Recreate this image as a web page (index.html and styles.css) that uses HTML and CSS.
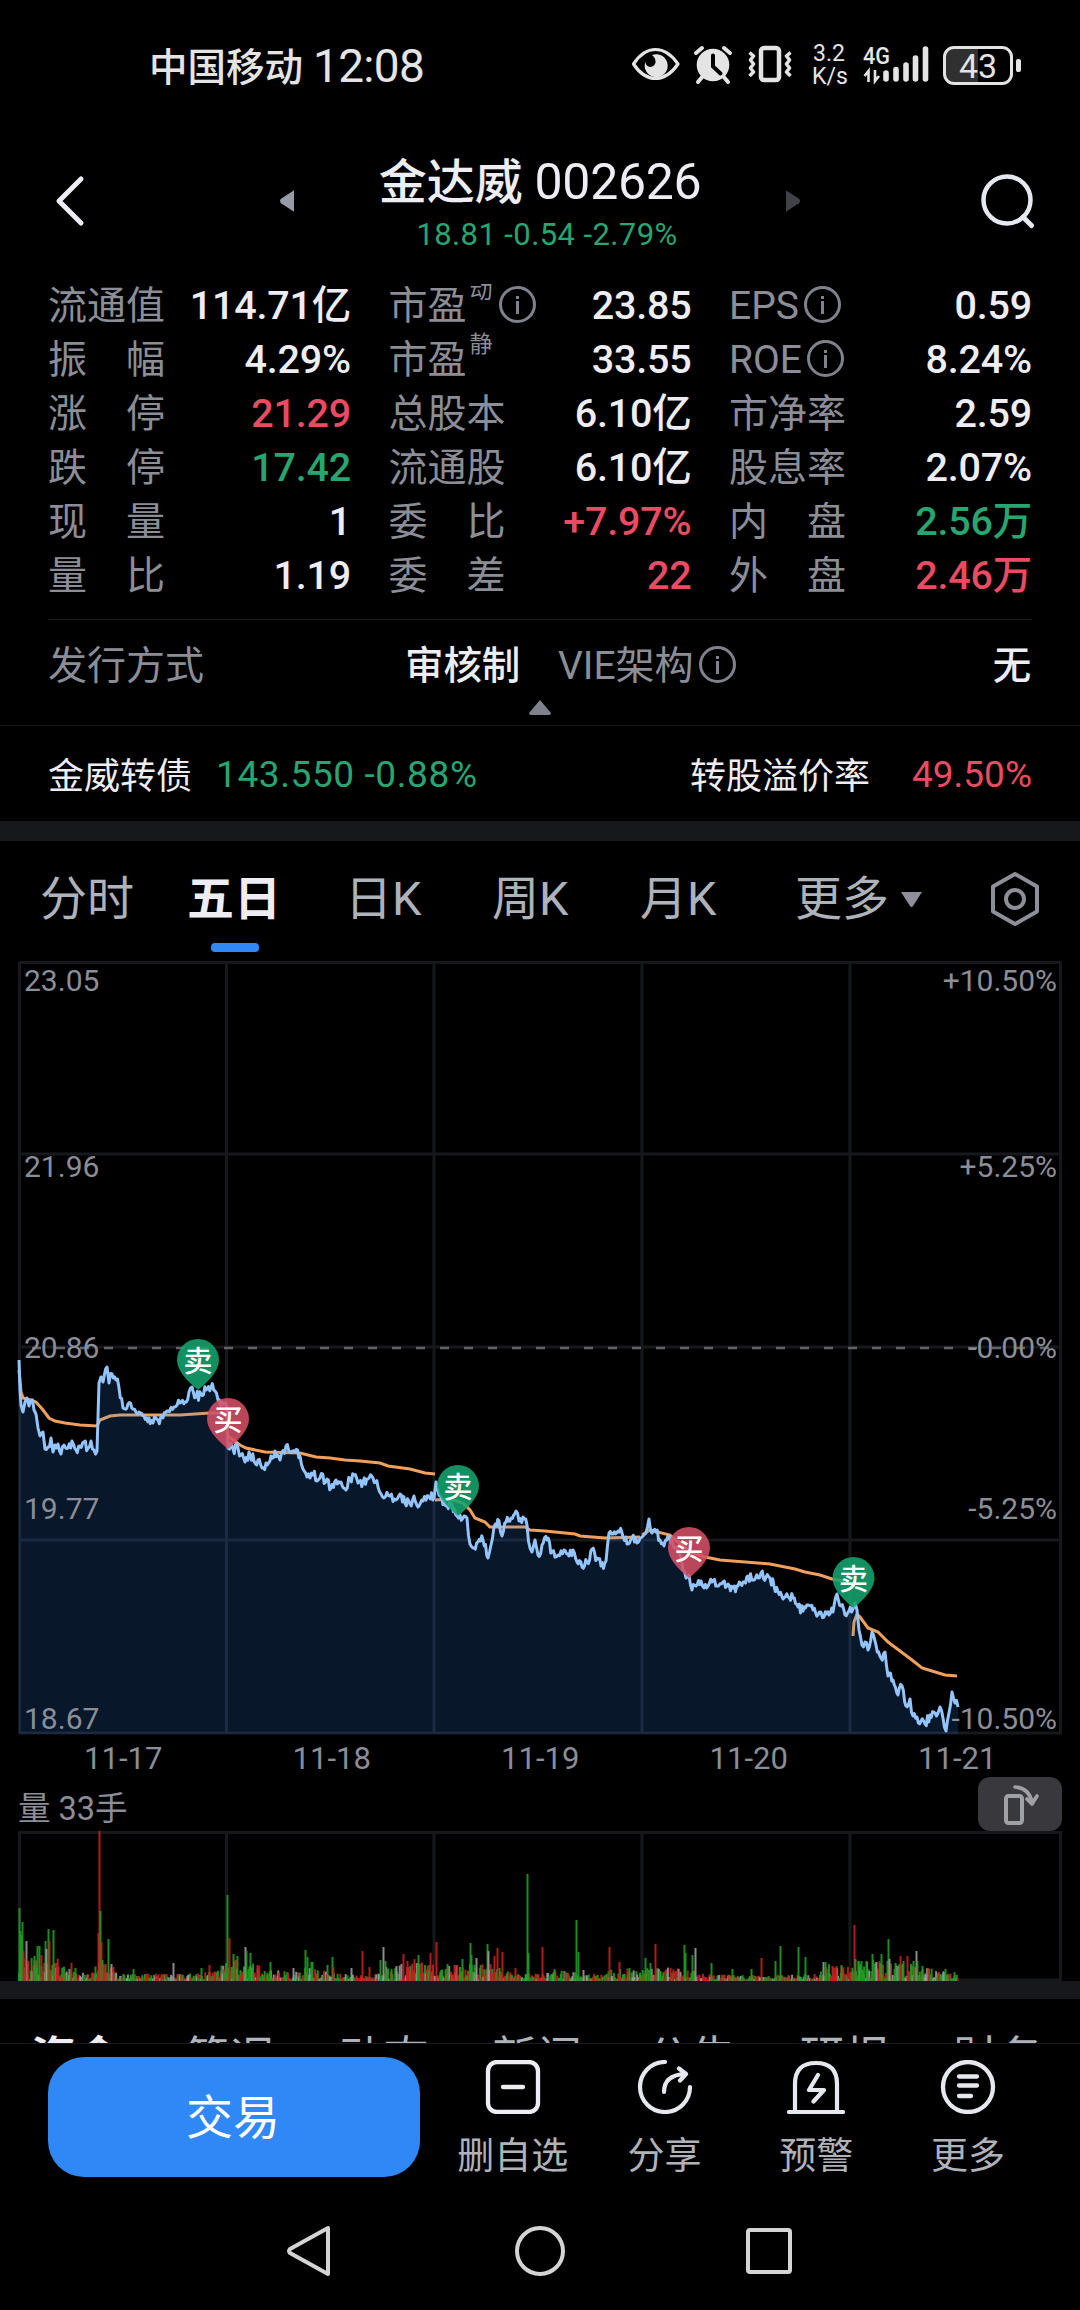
FILE: index.html
```html
<!DOCTYPE html>
<html lang="zh-CN">
<head>
  <meta charset="UTF-8" />
  <title>金达威 002626</title>
  <link rel="stylesheet" href="styles.css">
</head>
<body>

  <div class="status-bar">
    <div class="carrier">中国移动 <span>12:08</span></div>
    <svg class="status-icons" width="192" height="60" viewBox="620 35 192 60">
      <path d="M633.5 64Q643 49.500 655.500 49.500T678 64Q668 78.500 655.500 78.500T633.500 64Z" fill="none" stroke="#e4e4e4" stroke-width="3.200" stroke-linejoin="round"/>
      <path d="M652 55A11.500 11.500 0 1 1 645.500 61.500A5 5 0 0 0 655 64Q657 59 652 55Z" fill="#e4e4e4"/>
      <circle cx="713" cy="65" r="16.300" fill="#e4e4e4"/>
      <path d="M696 53l6-5M730 53l-6-5M703 76l-5 6M723 76l5 6" stroke="#e4e4e4" stroke-width="4" stroke-linecap="round"/>
      <path d="M713 55.500v11l7.500 7" fill="none" stroke="#000" stroke-width="4" stroke-linecap="round"/>
      <rect x="761" y="48" width="18" height="32" rx="3" fill="none" stroke="#e4e4e4" stroke-width="4.500"/>
      <path d="M749.500 52.500l4 3.500-3 4 3 4-3 4 3 4-4 4M790.500 52.500l-4 3.500 3 4-3 4 3 4-3 4 4 4" fill="none" stroke="#e4e4e4" stroke-width="3.500" stroke-linejoin="round"/>
    </svg>
    <div class="net-speed"><span>3.2</span><span>K/s</span></div>
    <svg class="signal" width="70" height="60" viewBox="860 35 70 60">
      <text x="863" y="64" class="signal-text" textLength="27" lengthAdjust="spacingAndGlyphs">4G</text>
      <path d="M868.500 82v-11l-4 5M875 70v11l4-5" fill="none" stroke="#e4e4e4" stroke-width="2.600"/>
      <path d="M886 73v6M896 69.500v9.500M906 65v14M915.500 58v21M925.500 49v30" stroke="#e4e4e4" stroke-width="5.600" stroke-linecap="round"/>
    </svg>
    <div class="battery"><span>43</span></div>
  </div>

  <header class="header">
    <div class="header-side left">
      <svg width="34" height="56" viewBox="0 0 34 56"><path d="M28 6L6 28l22 22" fill="none" stroke="#ededf3" stroke-width="5" stroke-linecap="round" stroke-linejoin="round"/></svg>
      <svg width="14" height="22" viewBox="0 0 13 20"><path d="M13 0v20L1 12Q-1 10 1 8Z" fill="#989ba6"/></svg>
    </div>
    <div class="title">
      <h1>金达威 <span>002626</span></h1>
      <p class="down">18.81 -0.54 -2.79%</p>
    </div>
    <div class="header-side right">
      <svg width="14" height="22" viewBox="0 0 13 20"><path d="M0 0v20L12 12Q14 10 12 8Z" fill="#414248"/></svg>
      <svg width="54" height="56" viewBox="0 0 54 56"><circle cx="27" cy="27" r="23.500" fill="none" stroke="#e6e8f0" stroke-width="4.500"/><path d="M43 44l8.500 8.500" stroke="#e6e8f0" stroke-width="5" stroke-linecap="round"/></svg>
    </div>
  </header>

  <section class="quote">
    <div class="cell"><label>流通值</label><b>114.71亿</b></div>
    <div class="cell"><label>市盈<sup class="cut">动</sup><i class="info"></i></label><b>23.85</b></div>
    <div class="cell"><label>EPS<i class="info"></i></label><b>0.59</b></div>
    <div class="cell"><label>振　幅</label><b>4.29%</b></div>
    <div class="cell"><label>市盈<sup>静</sup></label><b>33.55</b></div>
    <div class="cell"><label>ROE<i class="info"></i></label><b>8.24%</b></div>
    <div class="cell"><label>涨　停</label><b class="up">21.29</b></div>
    <div class="cell"><label>总股本</label><b>6.10亿</b></div>
    <div class="cell"><label>市净率</label><b>2.59</b></div>
    <div class="cell"><label>跌　停</label><b class="down">17.42</b></div>
    <div class="cell"><label>流通股</label><b>6.10亿</b></div>
    <div class="cell"><label>股息率</label><b>2.07%</b></div>
    <div class="cell"><label>现　量</label><b>1</b></div>
    <div class="cell"><label>委　比</label><b class="up">+7.97%</b></div>
    <div class="cell"><label>内　盘</label><b class="down">2.56万</b></div>
    <div class="cell"><label>量　比</label><b>1.19</b></div>
    <div class="cell"><label>委　差</label><b class="up">22</b></div>
    <div class="cell"><label>外　盘</label><b class="up">2.46万</b></div>
  </section>

  <section class="extra">
    <div class="cell"><label>发行方式</label><b>审核制</b></div>
    <div class="cell"><label>VIE架构<i class="info"></i></label><b>无</b></div>
  </section>
  <div class="fold">
    <svg width="22" height="15" viewBox="0 0 22 15"><path d="M11 0L22 13Q22 15 20 15H2Q0 15 0 13Z" fill="#7f828d"/></svg>
  </div>

  <section class="bond">
    <span>金威转债</span>
    <span class="num down">143.550 -0.88%</span>
    <span class="rate">转股溢价率</span>
    <span class="num up">49.50%</span>
  </section>

  <div class="band"></div>

  <nav class="tabs">
    <span>分时</span>
    <span class="active">五日</span>
    <span>日K</span>
    <span>周K</span>
    <span>月K</span>
    <span>更多<svg width="21" height="15" viewBox="0 0 21 15"><path d="M0 0h21L12 14Q10.500 16 9 14Z" fill="#8d9099"/></svg></span>
    <svg width="52" height="56" viewBox="0 0 52 56"><path d="M26 3L48 15.500v25L26 53 4 40.500v-25Z" fill="none" stroke="#8d9099" stroke-width="4" stroke-linejoin="round"/><circle cx="26" cy="28" r="9" fill="none" stroke="#8d9099" stroke-width="4"/></svg>
  </nav>

  <svg class="chart" id="price" width="1080" height="820" viewBox="0 957 1080 820">
    <g class="grid">
      <path d="M19 962.500H1062M19 1154H1062M19 1347H1062M19 1540H1062M19 1733H1062"/>
      <path d="M19.500 962V1734M226.500 962V1734M434 962V1734M642 962V1734M850 962V1734M1060.500 962V1734"/>
    </g>
    <path class="zero" d="M32 1348H1060"/>
    <path class="avg" id="avg"/>
    <path class="area" id="area"/>
    <path class="line" id="line"/>
    <g class="axis">
      <text x="24" y="991">23.05</text>
      <text x="24" y="1177">21.96</text>
      <text x="24" y="1358">20.86</text>
      <text x="24" y="1519">19.77</text>
      <text x="24" y="1729">18.67</text>
      <g text-anchor="end">
        <text x="1057" y="991">+10.50%</text>
        <text x="1057" y="1177">+5.25%</text>
        <text x="1057" y="1358">-0.00%</text>
        <text x="1057" y="1519">-5.25%</text>
        <text x="1057" y="1729">-10.50%</text>
      </g>
    </g>
    <g id="pins"></g>
  </svg>

  <div class="dates">
    <span>11-17</span><span>11-18</span><span>11-19</span><span>11-20</span><span>11-21</span>
  </div>

  <div class="vol-head">
    <span>量 33手</span>
    <div class="rotate">
      <svg width="40" height="44" viewBox="0 0 40 44"><rect x="6" y="14" width="16" height="27" rx="2.500" fill="none" stroke="#a0a1a6" stroke-width="4"/><path d="M15 5Q29 6 32 20M27 17l5 5 5-8" fill="none" stroke="#a0a1a6" stroke-width="3.600" stroke-linecap="round" stroke-linejoin="round"/></svg>
    </div>
  </div>
  <svg class="chart" id="volume" width="1080" height="150" viewBox="0 1831 1080 150">
    <g class="grid">
      <path d="M18 1832.500H1062M18 1980H1062"/>
      <path d="M19.500 1831V1981M226.500 1831V1981M434 1831V1981M642 1831V1981M850 1831V1981M1060.500 1831V1981"/>
    </g>
    <g id="bars"></g>
  </svg>

  <div class="band low"></div>

  <nav class="sub-tabs">
    <span class="active">资金</span><span>简况</span><span>动态</span><span>新闻</span><span>公告</span><span>研报</span><span>财务</span>
  </nav>

  <footer class="toolbar">
    <button type="button">交易</button>
    <div class="tool">
      <svg width="58" height="54" viewBox="0 0 58 54"><rect x="4" y="2" width="50" height="50" rx="9" fill="none" stroke="#ededf3" stroke-width="4.300"/><path d="M19 27h20" stroke="#ededf3" stroke-width="4.300" stroke-linecap="round"/></svg>
      <span>删自选</span>
    </div>
    <div class="tool">
      <svg width="58" height="54" viewBox="0 0 58 54"><path d="M29 2A25 25 0 1 0 54 27M28 32Q28 15 49 14M43 8.500l7 5.500-6 6.500" fill="none" stroke="#e6e8f0" stroke-width="4.200" stroke-linecap="round" stroke-linejoin="round"/></svg>
      <span>分享</span>
    </div>
    <div class="tool">
      <svg width="58" height="54" viewBox="0 0 58 54"><path d="M8 51V24Q8 3 29 3T50 24V51M2 52H56M31 15L22 30H37L26.500 41.500" fill="none" stroke="#e6e8f0" stroke-width="4.200" stroke-linecap="round" stroke-linejoin="round"/></svg>
      <span>预警</span>
    </div>
    <div class="tool">
      <svg width="58" height="54" viewBox="0 0 58 54"><circle cx="29" cy="27" r="25" fill="none" stroke="#e6e8f0" stroke-width="4.300"/><path d="M20 16.500H38M20 25.500H38M20 36H32" stroke="#e6e8f0" stroke-width="4.300" stroke-linecap="round"/></svg>
      <span>更多</span>
    </div>
  </footer>

  <div class="system-nav">
    <svg width="44" height="52" viewBox="0 0 44 52"><path d="M41 3V49L3 28Q1 26 3 24Z" fill="none" stroke="#d4d4d4" stroke-width="4" stroke-linejoin="round"/></svg>
    <svg width="52" height="52" viewBox="0 0 52 52"><circle cx="26" cy="26" r="23" fill="none" stroke="#d4d4d4" stroke-width="4"/></svg>
    <svg width="46" height="46" viewBox="0 0 46 46"><rect x="2" y="2" width="42" height="42" rx="2" fill="none" stroke="#d4d4d4" stroke-width="4"/></svg>
  </div>

  <script src="chart.js"></script>
</body>
</html>
```

FILE: styles.css
```css
* {
  box-sizing: border-box;
}

body {
  margin: 0;
  width: 1080px;
  height: 2310px;
  overflow: hidden;
  background: #000;
  color: #ededf3;
  font-family: Roboto, "Noto Sans CJK SC", sans-serif;
}

svg {
  display: block;
  flex: none;
}

.up {
  color: #ea4b62;
}

.down {
  color: #27a671;
}

/* status bar */
.status-bar {
  display: flex;
  align-items: center;
  height: 130px;
  padding-left: 149px;
  color: #e4e4e4;
}

.carrier {
  display: flex;
  align-items: center;
  gap: 10px;
  width: 471px;
  padding-bottom: 3px;
  font-size: 38.5px;
  font-weight: 500;
}

.carrier span {
  padding-top: 4px;
  font-size: 46px;
  font-weight: 400;
  letter-spacing: -0.7px;
}

.net-speed {
  display: flex;
  flex-direction: column;
  width: 48px;
  padding-right: 14px;
  font-size: 23px;
  line-height: 23px;
  text-align: center;
  white-space: nowrap;
}

.net-speed span {
  height: 23px;
}

.signal-text {
  font-size: 24px;
  font-weight: 500;
  fill: #e4e4e4;
}

.battery {
  position: relative;
  width: 70px;
  height: 39px;
  margin-left: 13px;
  border: 3px solid #e4e4e4;
  border-radius: 11px;
  background: linear-gradient(to right, #303030 50%, #000 50%);
  font-size: 34px;
  line-height: 34px;
  text-align: center;
}

.battery::after {
  content: "";
  position: absolute;
  right: -11px;
  top: 10px;
  width: 5px;
  height: 13px;
  border-radius: 2px;
  background: #e4e4e4;
}

/* header */
.header {
  display: flex;
  align-items: center;
  height: 142px;
}

.header-side {
  display: flex;
  align-items: center;
  justify-content: space-between;
  width: 294px;
}

.header-side.left {
  padding-left: 53px;
}

.header-side.right {
  padding-right: 46px;
}

.title {
  flex: 1;
  padding-top: 8px;
  text-align: center;
}

.title h1 {
  margin: 0;
  font-size: 48px;
  line-height: 60px;
  font-weight: 500;
  white-space: nowrap;
}

.title h1 span {
  font-size: 50px;
  line-height: 1;
  font-weight: 400;
  letter-spacing: -0.3px;
}

.title p {
  margin: 0;
  padding-left: 14px;
  font-size: 31px;
  line-height: 44px;
  letter-spacing: 0.4px;
}

/* quote table */
.quote {
  display: grid;
  grid-template-columns: repeat(3, 303px);
  column-gap: 37.500px;
  grid-auto-rows: 54px;
  padding: 0 48px;
  margin-top: 7px;
}

.cell {
  display: flex;
  justify-content: space-between;
  line-height: 54px;
  font-size: 39px;
  white-space: nowrap;
}

.cell label {
  display: flex;
  color: #8b8e97;
}

.cell b {
  font-size: 39.5px;
  font-weight: 500;
  letter-spacing: -0.2px;
}

.cell sup {
  margin-left: 3px;
  font-size: 23px;
  line-height: 24px;
}

.cell sup.cut {
  clip-path: inset(5px 0 0 0);
}

.cell sup + .info {
  margin-left: 6px;
}

.info {
  position: relative;
  width: 37px;
  height: 37px;
  margin: 7px 0 0 5px;
  border: 3px solid #7f828d;
  border-radius: 50%;
}

.info::before,
.info::after {
  content: "";
  position: absolute;
  left: 14px;
  width: 3px;
  background: #7f828d;
}

.info::before {
  top: 7px;
  height: 3px;
}

.info::after {
  top: 12px;
  height: 13px;
}

.extra {
  display: grid;
  grid-template-columns: 472px 473px;
  column-gap: 38px;
  margin: 16px 48px 0;
  padding-top: 19px;
  border-top: 1px solid #1a1b1e;
}

.extra .cell b {
  font-size: 38.5px;
}

.fold {
  display: flex;
  justify-content: center;
  height: 33px;
  padding-top: 7px;
  border-bottom: 1px solid #1a1b1e;
}

.bond {
  display: flex;
  align-items: center;
  height: 95px;
  padding: 0 48px 1px;
  font-size: 36px;
}

.bond .num {
  padding-top: 2px;
  font-size: 37px;
}

.bond .down {
  margin-left: 24px;
  letter-spacing: 0.6px;
}

.bond .rate {
  margin-left: auto;
  margin-right: 42px;
}

.band {
  height: 20px;
  background: #17181c;
}

.band.low {
  height: 18px;
}

/* period tabs */
.tabs {
  display: grid;
  grid-template-columns: 147px 158px 147px 148px 155px 194px auto;
  align-items: center;
  height: 116px;
  padding-left: 40px;
  color: #aeb2ba;
  font-size: 47px;
  line-height: 116px;
}

.tabs span {
  display: flex;
  align-items: center;
  gap: 12px;
  height: 116px;
}

.tabs .active {
  position: relative;
  color: #ededf3;
  font-weight: 700;
}

.tabs .active::after {
  content: "";
  position: absolute;
  left: 24px;
  top: 102px;
  width: 48px;
  height: 9px;
  border-radius: 4px;
  background: #2f88f5;
}

/* charts */
.chart {
  overflow: visible;
}

#price {
  margin-bottom: -37px;
}

.grid path {
  fill: none;
  stroke: #17181c;
  stroke-width: 3;
}

.zero {
  stroke: #5f636c;
  stroke-width: 2.500;
  stroke-dasharray: 9 15;
}

.avg {
  fill: none;
  stroke: #f0a05a;
  stroke-width: 3;
}

.area {
  fill: #2f88f5;
  fill-opacity: 0.17;
}

.line {
  fill: none;
  stroke: #93c4fb;
  stroke-width: 3;
  stroke-linejoin: round;
}

.axis text {
  font-size: 30px;
  fill: #8b8e97;
}

.pin {
  opacity: 0.88;
}

.pin-text {
  font-size: 29px;
  font-weight: 500;
  fill: #fff;
  text-anchor: middle;
}

.dates {
  display: grid;
  grid-template-columns: repeat(5, 208.500px);
  height: 37px;
  padding-left: 19px;
  color: #8b8e97;
  font-size: 31px;
  line-height: 38px;
  text-align: center;
}

.vol-head {
  display: flex;
  justify-content: space-between;
  align-items: center;
  height: 54px;
  padding: 0 18px;
  color: #8b8e97;
  font-size: 32.5px;
}

.vol-head span {
  padding-top: 3px;
}

.rotate {
  display: flex;
  align-items: center;
  justify-content: center;
  width: 84px;
  height: 54px;
  border-radius: 12px;
  background: #39393d;
}

.sub-tabs {
  display: flex;
  height: 45px;
  padding: 33px 0 0 31px;
  overflow: hidden;
  border-bottom: 1px solid #1a1b1e;
  color: #aeb2ba;
  font-size: 45px;
  line-height: 54px;
}

.sub-tabs span {
  flex: none;
  width: 153.700px;
}

.sub-tabs .active {
  color: #ededf3;
  font-weight: 700;
}

/* bottom toolbar */
.toolbar {
  display: flex;
  height: 146px;
  padding: 13px 0 0 48px;
}

.toolbar button {
  width: 372px;
  height: 120px;
  margin-right: 17px;
  padding: 0 2px 7px 0;
  border: none;
  border-radius: 36px;
  background: #2f88f5;
  color: #fff;
  font-family: inherit;
  font-size: 47px;
}

.tool {
  display: flex;
  flex-direction: column;
  align-items: center;
  width: 151.700px;
  padding-top: 3px;
  color: #b0b2b9;
  font-size: 37px;
  line-height: 54px;
}

.tool span {
  padding-top: 16px;
}

.system-nav {
  display: flex;
  align-items: center;
  height: 120px;
  padding: 2px 0 0 287px;
}

.system-nav svg:nth-child(2) {
  margin: 0 180px 0 183px;
}
```

FILE: chart.js
```js
const svgNs = 'http://www.w3.org/2000/svg';

// five sessions of price, x y pairs
const price = `19 1360 20 1390 21 1405 23 1412 25 1402 27 1398 29 1406 31 1400 34 1410 36 1414 38 1428 40 1436 43 1432 45 1449
48 1447 51 1438 53 1452 55 1445 58 1444 61 1454 64 1445 68 1448 72 1441 76 1450 80 1446 84 1442 88 1448 91 1441 94 1450 97 1451
99 1383 101 1377 103 1382 107 1367 109 1383 112 1374 116 1380 119 1388 123 1408 128 1404 133 1409 139 1412 144 1416 149 1418
153 1423 158 1420 163 1418 168 1411 174 1407 180 1403 185 1402 189 1392 192 1387 196 1397 201 1394 206 1390 211 1387 215 1391
218 1400 222 1402 227 1408 228 1448 231 1443 233 1449 238 1448 241 1455 245 1462 249 1452 254 1461 258 1460 262 1468 266 1463
271 1456 275 1451 280 1460 286 1446 290 1452 295 1452 300 1456 303 1469 307 1477 313 1475 320 1478 327 1479 331 1488 336 1480
341 1482 346 1490 350 1478 354 1475 358 1483 363 1482 368 1479 373 1478 378 1487 384 1498 390 1496 396 1500 400 1494 405 1503
410 1504 414 1496 418 1507 423 1501 429 1497 434 1498 436 1482 439 1495 447 1506 452 1504 457 1516 460 1515 464 1516 467 1518
470 1544 474 1548 478 1542 483 1540 488 1558 491 1545 494 1527 499 1521 502 1536 506 1522 511 1518 516 1511 519 1521 523 1517
527 1525 530 1548 532 1552 535 1540 538 1555 542 1545 547 1540 552 1552 558 1555 564 1550 569 1556 573 1550 577 1562 582 1567
587 1562 592 1549 597 1558 601 1566 606 1561 609 1533 613 1534 618 1531 622 1533 627 1544 632 1538 637 1543 643 1536 646 1533
649 1519 652 1533 656 1532 660 1540 664 1546 668 1536 673 1545 680 1555 683 1570 686 1578 689 1575 692 1590 696 1586 701 1581
704 1588 708 1586 712 1582 717 1586 723 1582 728 1584 733 1588 738 1586 743 1582 748 1576 753 1580 758 1578 761 1573 766 1577
770 1578 774 1586 778 1592 783 1599 788 1597 793 1598 798 1607 803 1611 808 1605 813 1610 818 1615 824 1617 829 1615 833 1612
837 1594 841 1606 845 1615 849 1611 853 1609 855 1603 857 1610 859 1630 862 1645 865 1642 868 1650 872 1632 876 1645 881 1658
885 1652 888 1676 893 1680 898 1695 902 1686 906 1706 910 1699 913 1716 917 1717 921 1721 925 1724 930 1715 935 1713 938 1713
940 1707 943 1718 946 1731 949 1713 952 1692 955 1703 958 1707`;

// average line, one entry per session
const average = [
  '19 1370 21 1392 23 1398 30 1400 36 1402 43 1410 49 1418 55 1421 65 1423 80 1425 97 1426 100 1420 110 1416 120 1415 180 1415 210 1413 226 1413',
  '228 1436 240 1445 246 1448 265 1452 300 1453 316 1457 330 1458 345 1460 360 1461 380 1463 388 1466 410 1469 425 1473 435 1474',
  '435 1500 450 1499 463 1503 470 1510 475 1518 485 1522 490 1527 525 1527 530 1530 545 1531 575 1534 580 1536 605 1538 640 1537',
  '642 1535 650 1530 670 1535 690 1552 705 1557 720 1560 770 1564 795 1569 805 1572 820 1575 832 1579 848 1582',
  '853 1636 854 1622 857 1614 860 1617 868 1628 878 1632 888 1642 900 1651 912 1660 922 1668 932 1671 945 1675 957 1676'
];

const pins = [
  [198, 1360, '卖'], [228, 1419, '买'], [458, 1486, '卖'], [689, 1548, '买'], [853.5, 1578, '卖']
];

// volume spikes: x, height, colour
const spikes = `19 73 g 20 50 g 22 59 g 21 46 g 23 30 r 26 40 w 25 23 r 28 20 r 34 25 g 37 35 g 39 35 g 41 26 r 45 40 g 46 32 w 48 52 g 49 40 r 53 51 g 56 18 r
71 18 r 75 13 g 99 150 r 100 70 g 98 48 r 101 39 r 102 21 g 103 16 r 105 17 r 108 42 g 111 17 w 113 14 r 133 12 g 173 18 w 201 13 g 209 16 r 227 86 g 229 43 r
233 27 g 235 21 r 237 25 g 245 34 w 246 30 g 250 28 g 257 16 r 270 19 g 293 13 w 305 31 g 307 24 g 311 19 g 312 19 g 327 16 g 332 24 g 333 14 r 351 13 w
362 30 r 369 14 r 380 21 g 383 34 w 385 20 g 396 15 w 403 27 r 407 20 r 414 22 r 418 26 g 421 18 r 430 28 r 436 39 r 447 17 g 454 16 r 462 22 g 470 38 g 471 26 g
476 23 w 487 37 g 488 30 w 494 25 r 497 33 r 502 29 r 515 13 r 527 107 g 528 28 g 542 34 r 554 12 g 576 61 g 578 29 g 583 11 w 609 34 r 619 19 r 629 13 g
645 23 g 650 18 g 655 37 r 684 36 g 685 28 g 692 26 g 695 33 w 711 18 g 732 12 g 751 12 g 761 23 r 775 20 g 780 35 g 798 34 g 805 24 g 823 19 w 825 19 g
832 15 r 836 15 r 841 16 g 854 56 r 855 22 g 858 20 g 861 20 g 866 20 g 872 27 g 876 19 w 881 27 g 888 42 g 889 22 w 895 18 g 900 25 r 903 20 g 907 25 r
913 20 g 916 30 w 917 20 g 922 15 g 928 13 r 945 12 g 954 9 g`;

// upper bound of the small bars along x
const envelope = [[18, 26], [35, 20], [52, 27], [62, 14], [76, 8], [90, 6], [98, 20], [110, 12], [120, 6], [200, 6], [215, 11],
  [227, 20], [248, 20], [265, 12], [290, 7], [305, 14], [330, 7], [370, 4], [385, 14], [400, 16], [435, 18], [450, 14], [480, 20],
  [505, 9], [520, 5], [540, 8], [560, 9], [590, 5], [610, 11], [640, 11], [655, 14], [690, 12], [705, 5], [800, 5], [820, 8],
  [827, 16], [850, 12], [858, 22], [882, 20], [920, 16], [938, 9], [955, 7], [958, 1]];

const colors = { g: '#1f9a24', r: '#c4201f', w: '#98999c' };

function toPairs(text) {
  const n = text.trim().split(/\s+/).map(Number);
  const out = [];
  for (let i = 0; i < n.length; i += 2) out.push([n[i], n[i + 1]]);
  return out;
}

let seed = 26;
function rand() {
  seed = (seed * 16807) % 2147483647;
  return seed / 2147483647;
}

function add(parent, tag, attrs, text) {
  const el = document.createElementNS(svgNs, tag);
  for (const key in attrs) el.setAttribute(key, attrs[key]);
  if (text) el.textContent = text;
  parent.appendChild(el);
}

function envelopeAt(x) {
  for (let i = 1; i < envelope.length; i++) {
    const [x0, y0] = envelope[i - 1];
    const [x1, y1] = envelope[i];
    if (x <= x1) return y0 + (y1 - y0) * (x - x0) / (x1 - x0);
  }
  return 1;
}

// price line with minute ticks between the main points
const main = toPairs(price);
let d = `M${main[0]}`;
for (let i = 1; i < main.length; i++) {
  const [x0, y0] = main[i - 1];
  const [x1, y1] = main[i];
  const steps = Math.max(1, Math.round((x1 - x0) / 1.4));
  for (let s = 1; s < steps; s++) {
    const y = y0 + (y1 - y0) * s / steps + (rand() - 0.5) * 10;
    d += `L${(x0 + (x1 - x0) * s / steps).toFixed(1)} ${Math.min(y, 1731).toFixed(1)}`;
  }
  d += `L${x1} ${y1}`;
}
document.getElementById('line').setAttribute('d', d);
document.getElementById('area').setAttribute('d', `${d}V1734H19Z`);
document.getElementById('avg').setAttribute('d', average.map(s => 'M' + toPairs(s).join('L')).join(''));

const pinBox = document.getElementById('pins');
pins.forEach(([x, y, text]) => {
  add(pinBox, 'path', {
    class: 'pin',
    fill: text === '卖' ? '#15a46e' : '#d35065',
    d: `M${x} ${y + 30}Q${x - 21} ${y + 13} ${x - 21} ${y}A21 21 0 0 1 ${x + 21} ${y}Q${x + 21} ${y + 13} ${x} ${y + 30}Z`
  });
  add(pinBox, 'text', { class: 'pin-text', x, y: y + 12 }, text);
});

const bars = document.getElementById('bars');
function bar(x, h, color) {
  add(bars, 'rect', { x: x, y: 1981 - h, width: 2, height: h, fill: color, 'fill-opacity': 0.9 });
}
for (let x = 18; x < 957; x += 0.9) {
  const r = rand();
  const color = r < 0.42 ? colors.g : r < 0.82 ? colors.r : colors.w;
  bar(x.toFixed(1), 1.5 + envelopeAt(x) * Math.pow(rand(), 1.3), color);
}
const list = spikes.trim().split(/\s+/);
for (let i = 0; i < list.length; i += 3) {
  bar(+list[i] - 0.5, +list[i + 1], colors[list[i + 2]]);
}
```
